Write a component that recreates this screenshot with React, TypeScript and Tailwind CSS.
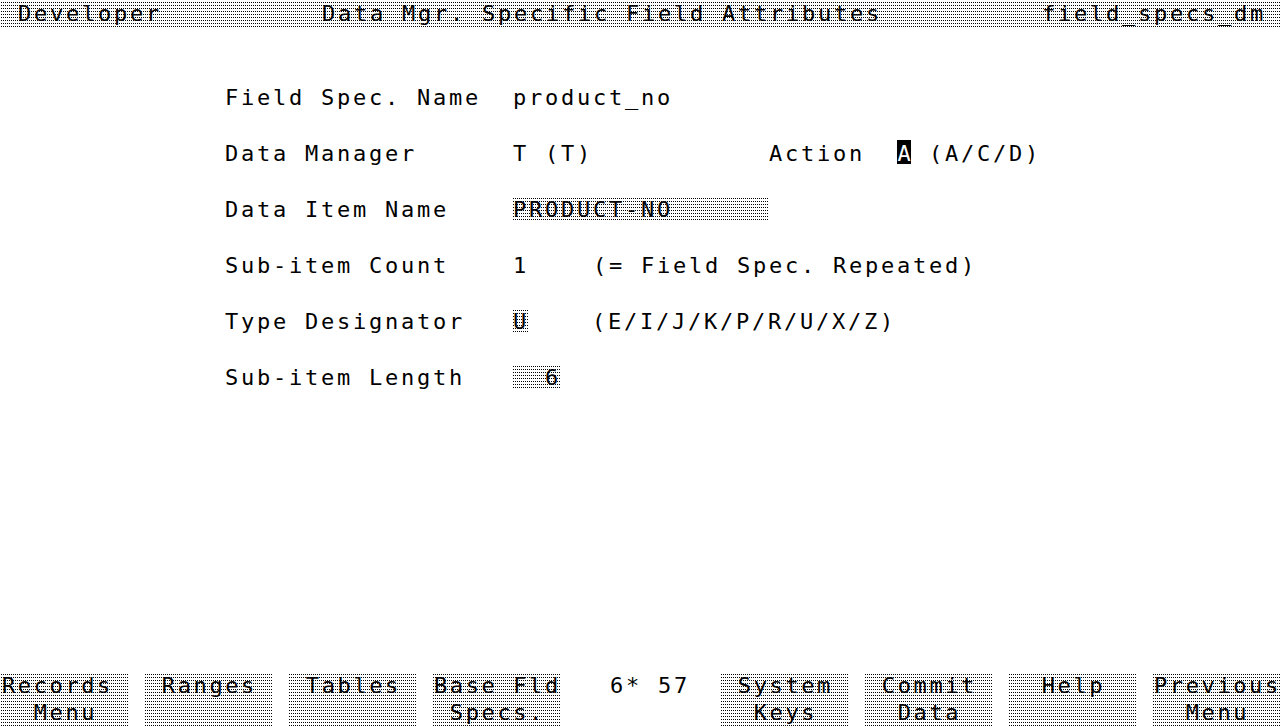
import React from 'react';

// dithered grey used by the terminal for bars, keys and input fields
const dots =
    'bg-black bg-[linear-gradient(to_right,#fff_1px,transparent_1px),linear-gradient(to_bottom,#fff_2px,transparent_2px)] bg-[length:2px_3px]';

const term =
    "font-['DejaVu_Sans_Mono','Liberation_Mono',monospace] text-[22px] tracking-[2.755px] text-black whitespace-pre";

function Row({ label, children }: { label: string; children?: React.ReactNode }) {
    return (
        <div className="flex h-[28px] leading-[28px]">
            <div className="w-[288px] pl-[1px]">{label}</div>
            <div>{children}</div>
        </div>
    );
}

function Field({ text, cells }: { text: string; cells: string }) {
    return <span className={`${dots} ${cells} inline-block h-[26px] pl-[1px] align-top leading-[28px]`}>{text}</span>;
}

function SoftKey({ top, bottom = '' }: { top: string; bottom?: string }) {
    return (
        <div className={`${dots} w-[128px] shrink-0 pl-[2px] leading-[27px] tracking-[2.6px]`}>
            <div>{top}</div>
            <div>{bottom}</div>
        </div>
    );
}

export default function App() {
    return (
        <div className={`${term} flex h-[726px] w-[1280px] flex-col overflow-hidden bg-white`}>
            <div className={`${dots} h-[27px] pl-[2px] leading-[27px]`}>
                {' Developer          Data Mgr. Specific Field Attributes          field_specs_dm'}
            </div>

            <div className="mt-[57px] flex flex-col gap-[28px] pl-[224px]">
                <Row label="Field Spec. Name">
                    <span className="pl-[1px]">product_no</span>
                </Row>
                <Row label="Data Manager">
                    <span className="pl-[1px]">{'T (T)           Action  '}</span>
                    <span className="inline-block w-[16px] align-top">
                        <span className="inline-block h-[24px] w-[14px] bg-black text-center leading-[28px] tracking-normal text-white">
                            A
                        </span>
                    </span>
                    {' (A/C/D)'}
                </Row>
                <Row label="Data Item Name">
                    <Field text="PRODUCT-NO" cells="w-[256px]" />
                </Row>
                <Row label="Sub-item Count">
                    <span className="pl-[1px]">{'1    (= Field Spec. Repeated)'}</span>
                </Row>
                <Row label="Type Designator">
                    <Field text="U" cells="w-[16px]" />
                    {'    (E/I/J/K/P/R/U/X/Z)'}
                </Row>
                <Row label="Sub-item Length">
                    <Field text="  6" cells="w-[48px]" />
                </Row>
            </div>

            <div className="mt-auto flex h-[54px] gap-[16px]">
                <SoftKey top="Records" bottom="  Menu" />
                <SoftKey top=" Ranges" />
                <SoftKey top=" Tables" />
                <SoftKey top="Base Fld" bottom=" Specs." />
                <div className="w-[128px] shrink-0 pl-[2px] leading-[27px]">{'  6* 57'}</div>
                <SoftKey top=" System" bottom="  Keys" />
                <SoftKey top=" Commit" bottom="  Data" />
                <SoftKey top="  Help" />
                <SoftKey top="Previous" bottom="  Menu" />
            </div>
        </div>
    );
}
